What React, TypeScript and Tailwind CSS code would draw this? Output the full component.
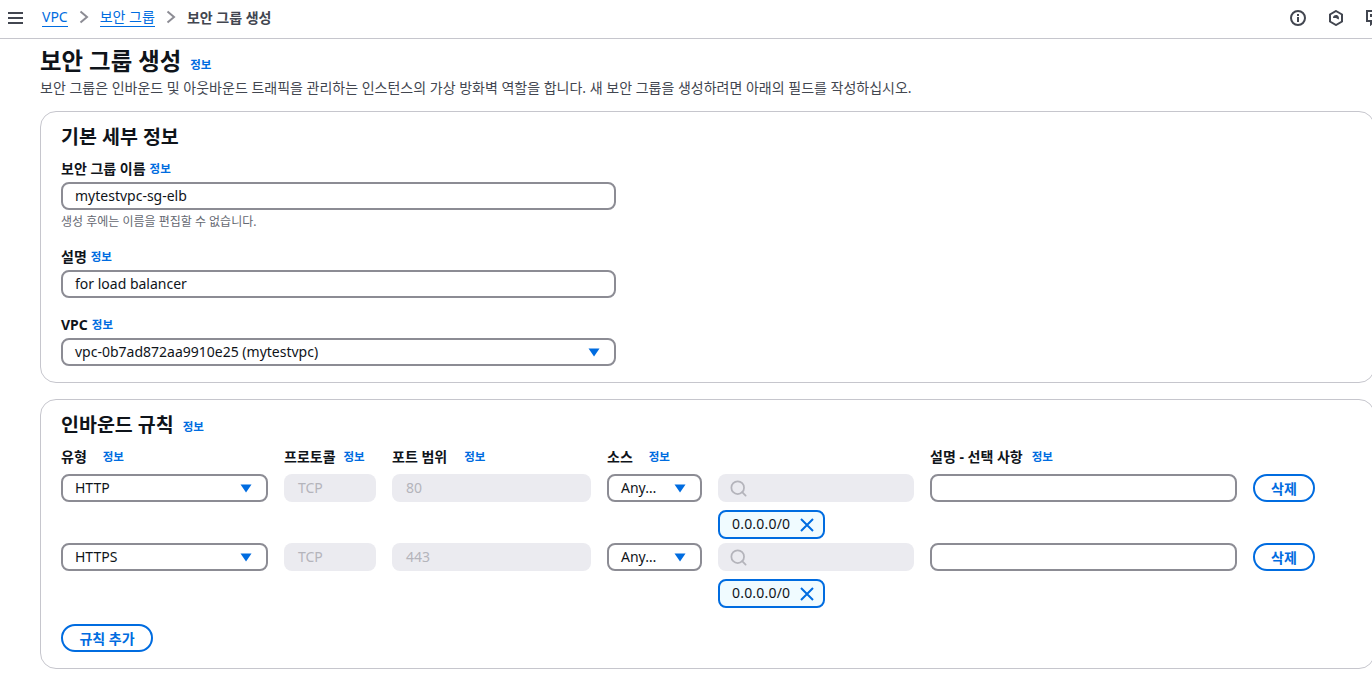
import { Search } from "lucide-react";

const FONT = "font-['Noto_Sans','Noto_Sans_CJK_KR',sans-serif]";

function Info({ className = "" }: { className?: string }) {
    return <span className={`text-[11.5px] leading-[14px] font-semibold text-[#006ce0] ${className}`}>정보</span>
}

function Caret() {
    return <svg width="12" height="9" viewBox="0 0 12 9" className="shrink-0">
        <path d="M0.5 0.5h11L6 8.5z" fill="#006ce0" />
    </svg>
}

function Select({ value, className = "" }: { value: string, className?: string }) {
    return <div className={`h-7 flex items-center justify-between pl-3 pr-[14px] bg-white border-2 border-[#8c8c94] rounded-lg text-[14px] text-[#0f141a] ${className}`}>
        <span className="-mt-[2px]">{value}</span>
        <Caret />
    </div>
}

function TextBox({ value, className = "" }: { value?: string, className?: string }) {
    return <div className={`h-7 flex items-center pl-3 bg-white border-2 border-[#8c8c94] rounded-lg text-[14px] text-[#0f141a] ${className}`}>
        <span className="-mt-[2px]">{value}</span>
    </div>
}

function Disabled({ value }: { value: string }) {
    return <div className="h-7 flex items-center pl-[14px] bg-[#ebebf0] rounded-lg text-[14px] text-[#b4b4bb]">
        <span className="-mt-[1px]">{value}</span>
    </div>
}

function Head({ label, gap, className = "" }: { label: string, gap: string, className?: string }) {
    return <div className={`flex items-center h-[20px] ${gap} ${className}`}>
        <span className="text-[14px] font-bold text-[#0f141a]">{label}</span>
        <Info className="mt-[2px]" />
    </div>
}

function Token() {
    return <div className="h-[29px] w-[107px] flex items-center justify-between pl-3 pr-[9px] bg-[#f0fbff] border-2 border-[#006ce0] rounded-lg text-[14px] text-[#0f141a]">
        <span className="-mt-[2px] tracking-[0.2px]">0.0.0.0/0</span>
        <svg width="14" height="14" viewBox="0 0 14 14" fill="none" stroke="#006ce0" strokeWidth="2">
            <path d="M1 1l12 12M13 1L1 13" />
        </svg>
    </div>
}

function DeleteButton() {
    return <div className="h-7 w-[62px] flex items-center justify-center border-2 border-[#006ce0] rounded-full text-[14px] font-bold text-[#006ce0]">삭제</div>
}

function Rule({ type, port }: { type: string, port: string }) {
    return <div className="grid grid-cols-[207px_92px_199px_95px_196px_307px_62px] gap-x-4">
        <Select value={type} />
        <Disabled value="TCP" />
        <Disabled value={port} />
        <Select value="Any…" className="pr-3" />
        <div className="flex flex-col gap-2">
            <div className="h-7 flex items-center pl-[11px] bg-[#ebebf0] rounded-lg">
                <Search size={19} strokeWidth={2.2} color="#b4b4bb" />
            </div>
            <Token />
        </div>
        <TextBox />
        <DeleteButton />
    </div>
}

export default function App() {
    return <div className={`w-[1372px] h-[677px] overflow-hidden bg-white ${FONT}`}>
        <header className="h-[39px] border-b border-[#c6c6cd] flex items-center pl-2 relative">
            <svg width="15" height="12" viewBox="0 0 15 12" className="shrink-0 mb-[2px]">
                <path d="M0 1h15M0 6h15M0 11h15" stroke="#424650" strokeWidth="2" />
            </svg>
            <nav className="flex items-center ml-[19px] text-[14px] text-[#424650] mb-[4px]">
                <span className="text-[#006ce0] border-b border-[#006ce0] leading-[19px]">VPC</span>
                <svg width="10" height="14" viewBox="0 0 10 14" className="mx-[11px]">
                    <path d="M1.5 1.5 8 7l-6.5 5.5" fill="none" stroke="#8c8c94" strokeWidth="2" />
                </svg>
                <span className="text-[#006ce0] border-b border-[#006ce0] leading-[19px]">보안 그룹</span>
                <svg width="10" height="14" viewBox="0 0 10 14" className="mx-[11px]">
                    <path d="M1.5 1.5 8 7l-6.5 5.5" fill="none" stroke="#8c8c94" strokeWidth="2" />
                </svg>
                <span className="font-semibold">보안 그룹 생성</span>
            </nav>
            <div className="ml-auto flex items-center gap-[22px] mb-[2px] -mr-[10px]">
                <svg width="16" height="16" viewBox="0 0 16 16" fill="none" stroke="#424650" strokeWidth="2">
                    <circle cx="8" cy="8" r="7" />
                    <path d="M8 7v5M8 4v2" />
                </svg>
                <svg width="16" height="16" viewBox="0 0 16 16" fill="none" stroke="#424650" strokeWidth="2">
                    <path d="M8 1l6 3.5v7L8 15l-6-3.5v-7z" />
                    <path d="M5 8a3 3 0 1 1 5.5 1.6L8 8z" fill="#424650" stroke="none" />
                </svg>
                <svg width="16" height="16" viewBox="0 0 16 16" fill="none" stroke="#424650" strokeWidth="2">
                    <path d="M1 1h14v10H8l-3 3v-3H1z" />
                    <path d="M5 4v3M9 4h3v3H9z" />
                </svg>
            </div>
        </header>

        <main className="pl-10">
            <div className="flex items-center gap-[9px] h-[42px] pt-[2px]">
                <h1 className="text-[23.4px] font-bold leading-[30px] text-[#0f141a]">보안 그룹 생성</h1>
                <Info className="mt-[8px]" />
            </div>
            <p className="text-[14px] leading-[18px] text-[#424650] -mt-[2px]">보안 그룹은 인바운드 및 아웃바운드 트래픽을 관리하는 인스턴스의 가상 방화벽 역할을 합니다. 새 보안 그룹을 생성하려면 아래의 필드를 작성하십시오.</p>

            <section className="mt-[14px] -mr-[3px] h-[272px] border border-[#c6c6cd] rounded-2xl pl-5 pt-[12px]">
                <h2 className="text-[19.5px] font-bold leading-[26px] text-[#0f141a]">기본 세부 정보</h2>
                <Head label="보안 그룹 이름" gap="gap-1" className="mt-[8px]" />
                <TextBox value="mytestvpc-sg-elb" className="w-[555px] mt-[4px]" />
                <p className="text-[12px] leading-[14px] text-[#656871] mt-[5px]">생성 후에는 이름을 편집할 수 없습니다.</p>
                <Head label="설명" gap="gap-1" className="mt-[17px]" />
                <TextBox value="for load balancer" className="w-[555px] mt-[4px]" />
                <Head label="VPC" gap="gap-1" className="mt-[16px]" />
                <Select value="vpc-0b7ad872aa9910e25 (mytestvpc)" className="w-[555px] mt-[4px]" />
            </section>

            <section className="mt-[16px] -mr-[3px] h-[270px] border border-[#c6c6cd] rounded-2xl pl-5 pt-[12px]">
                <div className="flex items-center gap-[9px]">
                    <h2 className="text-[19.5px] font-bold leading-[26px] text-[#0f141a]">인바운드 규칙</h2>
                    <Info className="mt-[4px]" />
                </div>
                <div className="grid grid-cols-[207px_92px_199px_95px_196px_307px_62px] gap-x-4 mt-[8px] mb-[8px]">
                    <Head label="유형" gap="gap-[16px]" />
                    <Head label="프로토콜" gap="gap-2" />
                    <Head label="포트 범위" gap="gap-[17px]" />
                    <Head label="소스" gap="gap-[16px]" />
                    <div />
                    <Head label="설명 - 선택 사항" gap="gap-[9px]" />
                    <div />
                </div>
                <div className="flex flex-col gap-1">
                    <Rule type="HTTP" port="80" />
                    <Rule type="HTTPS" port="443" />
                </div>
                <div className="h-7 w-[92px] mt-[16px] flex items-center justify-center border-2 border-[#006ce0] rounded-full text-[14px] font-bold text-[#006ce0]">규칙 추가</div>
            </section>
        </main>
    </div>
}
